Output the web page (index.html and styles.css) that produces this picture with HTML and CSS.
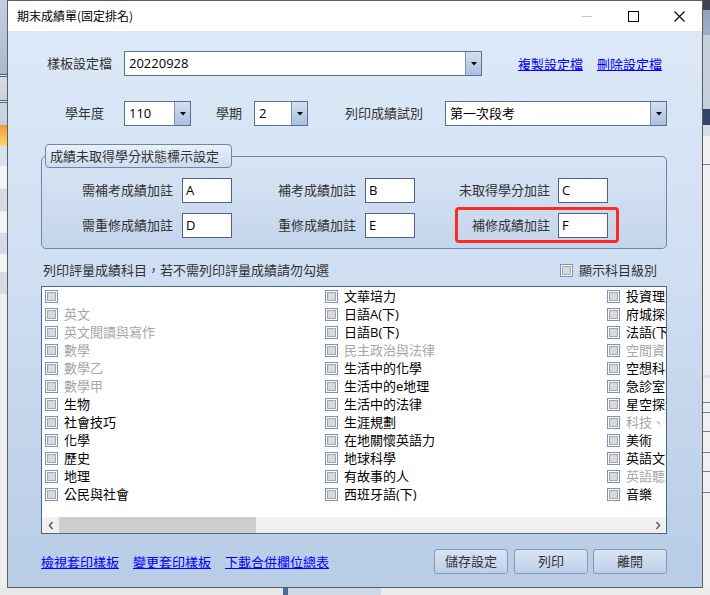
FILE: index.html
```html
<!DOCTYPE html>
<html lang="zh-Hant">
<head>
<meta charset="utf-8">
<title>期末成績單(固定排名)</title>
<link rel="stylesheet" href="styles.css">
</head>
<body>
<div class="desk">
  <div class="strip strip-left"></div>
  <div class="window">
    <div class="titlebar">
      <span class="title">期末成績單(固定排名)</span>
      <div class="controls">
        <span class="ctl"><svg width="10" height="10" viewBox="0 0 10 10"><path d="M0 5.5H10" stroke="#c4c4c4" stroke-width="1"/></svg></span>
        <span class="ctl"><svg width="11" height="11" viewBox="0 0 11 11"><rect x="0.5" y="0.5" width="10" height="10" fill="none" stroke="#000" stroke-width="1"/></svg></span>
        <span class="ctl"><svg width="11" height="11" viewBox="0 0 11 11"><path d="M0.5 0.5L10.5 10.5M10.5 0.5L0.5 10.5" stroke="#000" stroke-width="1.1"/></svg></span>
      </div>
    </div>
    <div class="content">
      <div class="row row-template">
        <span class="lbl lbl-template">樣板設定檔</span>
        <div class="combo combo-template"><span class="combo-text">20220928</span><span class="drop"><svg width="6" height="4" viewBox="0 0 6 4"><path d="M0 0H6L3 3.5Z" fill="#000"/></svg></span></div>
        <a class="link link-copy" href="#">複製設定檔</a>
        <a class="link link-del" href="#">刪除設定檔</a>
      </div>
      <div class="row row-year">
        <span class="lbl lbl-year">學年度</span>
        <div class="combo combo-year"><span class="combo-text">110</span><span class="drop"><svg width="6" height="4" viewBox="0 0 6 4"><path d="M0 0H6L3 3.5Z" fill="#000"/></svg></span></div>
        <span class="lbl lbl-term">學期</span>
        <div class="combo combo-term"><span class="combo-text">2</span><span class="drop"><svg width="6" height="4" viewBox="0 0 6 4"><path d="M0 0H6L3 3.5Z" fill="#000"/></svg></span></div>
        <span class="lbl lbl-exam">列印成績試別</span>
        <div class="combo combo-exam"><span class="combo-text">第一次段考</span><span class="drop"><svg width="6" height="4" viewBox="0 0 6 4"><path d="M0 0H6L3 3.5Z" fill="#000"/></svg></span></div>
      </div>
      <div class="group">
        <div class="group-title">成績未取得學分狀態標示設定</div>
        <div class="grow">
          <span class="glbl g1">需補考成績加註</span><span class="tb">A</span>
          <span class="glbl g2">補考成績加註</span><span class="tb">B</span>
          <span class="glbl g3">未取得學分加註</span><span class="tb">C</span>
        </div>
        <div class="grow grow2">
          <span class="glbl g1">需重修成績加註</span><span class="tb">D</span>
          <span class="glbl g2">重修成績加註</span><span class="tb">E</span>
          <span class="glbl g3">補修成績加註</span><span class="tb">F</span>
        </div>
        <div class="highlight"></div>
      </div>
      <div class="row row-listhead">
        <span class="listlabel">列印評量成績科目，若不需列印評量成績請勿勾選</span>
        <span class="showlevel"><span class="cb"><span class="cb-in"></span></span><span>顯示科目級別</span></span>
      </div>
      <div class="listbox">
        <div class="items">
          <div class="col c1">
            <div class="item"><span class="cb"><span class="cb-in"></span></span><span></span></div>
            <div class="item off"><span class="cb"><span class="cb-in"></span></span><span>英文</span></div>
            <div class="item off"><span class="cb"><span class="cb-in"></span></span><span>英文閱讀與寫作</span></div>
            <div class="item off"><span class="cb"><span class="cb-in"></span></span><span>數學</span></div>
            <div class="item off"><span class="cb"><span class="cb-in"></span></span><span>數學乙</span></div>
            <div class="item off"><span class="cb"><span class="cb-in"></span></span><span>數學甲</span></div>
            <div class="item"><span class="cb"><span class="cb-in"></span></span><span>生物</span></div>
            <div class="item"><span class="cb"><span class="cb-in"></span></span><span>社會技巧</span></div>
            <div class="item"><span class="cb"><span class="cb-in"></span></span><span>化學</span></div>
            <div class="item"><span class="cb"><span class="cb-in"></span></span><span>歷史</span></div>
            <div class="item"><span class="cb"><span class="cb-in"></span></span><span>地理</span></div>
            <div class="item"><span class="cb"><span class="cb-in"></span></span><span>公民與社會</span></div>
          </div>
          <div class="col c2">
            <div class="item"><span class="cb"><span class="cb-in"></span></span><span>文華培力</span></div>
            <div class="item"><span class="cb"><span class="cb-in"></span></span><span>日語A(下)</span></div>
            <div class="item"><span class="cb"><span class="cb-in"></span></span><span>日語B(下)</span></div>
            <div class="item off"><span class="cb"><span class="cb-in"></span></span><span>民主政治與法律</span></div>
            <div class="item"><span class="cb"><span class="cb-in"></span></span><span>生活中的化學</span></div>
            <div class="item"><span class="cb"><span class="cb-in"></span></span><span>生活中的e地理</span></div>
            <div class="item"><span class="cb"><span class="cb-in"></span></span><span>生活中的法律</span></div>
            <div class="item"><span class="cb"><span class="cb-in"></span></span><span>生涯規劃</span></div>
            <div class="item"><span class="cb"><span class="cb-in"></span></span><span>在地關懷英語力</span></div>
            <div class="item"><span class="cb"><span class="cb-in"></span></span><span>地球科學</span></div>
            <div class="item"><span class="cb"><span class="cb-in"></span></span><span>有故事的人</span></div>
            <div class="item"><span class="cb"><span class="cb-in"></span></span><span>西班牙語(下)</span></div>
          </div>
          <div class="col c3">
            <div class="item"><span class="cb"><span class="cb-in"></span></span><span>投資理財</span></div>
            <div class="item"><span class="cb"><span class="cb-in"></span></span><span>府城探索</span></div>
            <div class="item"><span class="cb"><span class="cb-in"></span></span><span>法語(下)</span></div>
            <div class="item off"><span class="cb"><span class="cb-in"></span></span><span>空間資訊</span></div>
            <div class="item"><span class="cb"><span class="cb-in"></span></span><span>空想科學</span></div>
            <div class="item"><span class="cb"><span class="cb-in"></span></span><span>急診室的故事</span></div>
            <div class="item"><span class="cb"><span class="cb-in"></span></span><span>星空探索</span></div>
            <div class="item off"><span class="cb"><span class="cb-in"></span></span><span>科技、社會與人文</span></div>
            <div class="item"><span class="cb"><span class="cb-in"></span></span><span>美術</span></div>
            <div class="item"><span class="cb"><span class="cb-in"></span></span><span>英語文寫作</span></div>
            <div class="item off"><span class="cb"><span class="cb-in"></span></span><span>英語聽講</span></div>
            <div class="item"><span class="cb"><span class="cb-in"></span></span><span>音樂</span></div>
          </div>
        </div>
        <div class="hscroll">
          <span class="sbtn"><svg width="8" height="9" viewBox="0 0 8 9"><path d="M5.5 1L2.5 4.5L5.5 8" fill="none" stroke="#606060" stroke-width="1.6"/></svg></span>
          <span class="track"><span class="thumb"></span></span>
          <span class="sbtn"><svg width="8" height="9" viewBox="0 0 8 9"><path d="M2.5 1L5.5 4.5L2.5 8" fill="none" stroke="#606060" stroke-width="1.6"/></svg></span>
        </div>
      </div>
      <div class="row row-bottom">
        <div class="links">
          <a class="link" href="#">檢視套印樣板</a>
          <a class="link" href="#">變更套印樣板</a>
          <a class="link" href="#">下載合併欄位總表</a>
        </div>
        <div class="buttons">
          <button class="btn">儲存設定</button>
          <button class="btn btn-print">列印</button>
          <button class="btn btn-exit">離開</button>
        </div>
      </div>
    </div>
  </div>
  <div class="strip strip-right"></div>
</div>
<div class="bottomstrip"></div>
</body>
</html>
```

FILE: styles.css
```css
* { box-sizing: border-box; }
html, body { margin: 0; padding: 0; }
body {
  width: 710px;
  height: 595px;
  overflow: hidden;
  background: #e6e7ea;
  font-family: "Open Sans", "Noto Sans CJK TC", sans-serif;
  font-size: 13px;
  color: #333;
}
.desk { display: flex; height: 588px; }
.strip { width: 7px; flex: none; }
.strip-left {
  background: linear-gradient(to bottom,
    #c3d0e1 0, #a9b9ce 74px,
    #4a5d7d 74px, #4a5d7d 75px, #e7ebf0 75px, #e7ebf0 76px, #4a5d7d 76px, #4a5d7d 77px,
    #d6dde7 77px, #c6d0dd 100px,
    #4e6283 100px, #4e6283 101px, #e7ebf0 101px, #e7ebf0 102px, #4e6283 102px, #4e6283 103px,
    #cbd6e4 103px, #c5d1e0 125px,
    #f09a35 125px, #f8d772 146px,
    #d9e1ec 146px, #d9e1ec 166px,
    #f3f3f3 166px, #f3f3f3 189px,
    #d3dce7 189px, #d3dce7 211px,
    #f3f3f3 211px, #f3f3f3 233px,
    #d3dce7 233px, #d3dce7 254px,
    #f3f3f3 254px, #f3f3f3 272px,
    #d3dce7 272px, #d3dce7 294px,
    #efefef 294px);
}
.strip-right {
  background: linear-gradient(to bottom,
    #3d444d 0, #3d444d 10px,
    #8ea2bb 10px, #9fb0c6 35px,
    #c6d0dc 35px, #c6d0dc 109px,
    #2f4461 109px, #34496a 125px,
    #d5dde6 125px, #d5dde6 136px,
    #f0f0f0 136px, #f0f0f0 164px,
    #6b7fa0 164px, #6b7fa0 165px,
    #f0f0f0 165px, #f0f0f0 375px,
    #d9e0ea 375px, #d9e0ea 378px,
    #f0f0f0 378px, #f0f0f0 402px,
    #6b7fa0 402px, #6b7fa0 403px,
    #f0f0f0 403px, #f0f0f0 412px,
    #6b7fa0 412px, #6b7fa0 413px,
    #f0f0f0 413px, #f0f0f0 431px,
    #6b7fa0 431px, #6b7fa0 432px,
    #f0f0f0 432px, #f0f0f0 452px,
    #6b7fa0 452px, #6b7fa0 453px,
    #f0f0f0 453px, #f0f0f0 471px,
    #6b7fa0 471px, #6b7fa0 472px,
    #f0f0f0 472px, #f0f0f0 492px,
    #6b7fa0 492px, #6b7fa0 493px,
    #f0f0f0 493px);
}
.bottomstrip {
  height: 7px;
  background: linear-gradient(to right,
    #e8e8e8 0, #e8e8e8 283px,
    #4f6890 283px, #4f6890 288px,
    #cfd9e6 288px, #cfd9e6 381px,
    #ececec 381px);
}
.window {
  width: 696px;
  height: 588px;
  flex: none;
  border: 1px solid #5e5e5e;
  display: flex;
  flex-direction: column;
  background: #fff;
}
.titlebar {
  height: 30px;
  flex: none;
  display: flex;
  align-items: center;
  background: #fff;
}
.title {
  padding-left: 9px;
  font-family: "Noto Sans CJK TC", sans-serif;
  font-size: 12px;
  color: #000;
  line-height: 16px;
}
.controls { margin-left: auto; display: flex; height: 30px; }
.ctl {
  width: 46px;
  height: 30px;
  display: flex;
  align-items: center;
  justify-content: center;
}
.ctl svg { display: block; }
.content {
  flex: 1;
  background: linear-gradient(to bottom, #dde9f8 0, #cfdef1 45%, #b8cce6 100%);
  padding: 20px 35px 0 33px;
}
.row { display: flex; align-items: center; height: 25px; }
.lbl { line-height: 25px; white-space: nowrap; color: #333; }
.lbl-template { width: 83px; padding-left: 6px; }
.combo {
  height: 25px;
  border: 1px solid #5b6f90;
  background: #fff;
  display: flex;
  align-items: stretch;
  color: #000;
}
.combo-text { flex: 1; padding-left: 4px; line-height: 23px; white-space: nowrap; overflow: hidden; }
.drop {
  width: 16px;
  margin: 0;
  border-left: 1px solid #7d91b2;
  background: linear-gradient(to bottom, #d3e0f1, #a9c0de);
  display: flex;
  align-items: center;
  justify-content: center;
}
.drop svg { display: block; margin-top: 1px; }
.combo-template { width: 358px; }
.link {
  color: #0000ff;
  text-decoration: underline;
  white-space: nowrap;
  line-height: 18px;
}
.link-copy { margin-left: 36px; }
.link-del { margin-left: 14px; }
.row-year { margin-top: 25px; }
.lbl-year { width: 83px; text-align: right; padding-right: 20px; }
.combo-year { width: 67px; }
.lbl-term { margin-left: 25px; }
.combo-term { width: 54px; margin-left: 12px; }
.lbl-exam { margin-left: 37px; }
.combo-exam { width: 222px; margin-left: 22px; }

.group {
  position: relative;
  margin-top: 30px;
  height: 93px;
  border: 1px solid #6f86ab;
  border-radius: 5px;
  background: linear-gradient(to bottom, rgba(255,255,255,0.05), rgba(120,150,200,0.14));
}
.group-title {
  margin: -13px 0 0 3px;
  width: 187px;
  height: 24px;
  border: 1px solid #6f86ab;
  border-radius: 4px;
  background: linear-gradient(to bottom, #e8f0fa, #cddbee);
  padding-left: 4px;
  line-height: 22px;
  color: #333;
  white-space: nowrap;
}
.grow { display: flex; align-items: center; height: 25px; margin-top: 10px; }
.grow2 { margin-top: 10px; }
.glbl { text-align: right; white-space: nowrap; color: #333; line-height: 25px; }
.g1 { width: 131px; margin-right: 9px; }
.g2 { width: 124px; margin-right: 9px; }
.g3 { width: 135px; margin-right: 8px; }
.tb {
  width: 50px;
  height: 25px;
  border: 1px solid #4f6389;
  background: #fff;
  color: #000;
  padding-left: 3px;
  line-height: 22px;
}
.grow2 .tb { height: 25px; }
.highlight {
  position: absolute;
  left: 413px;
  top: 50px;
  width: 164px;
  height: 36px;
  border: 3px solid #ff2a24;
  border-radius: 4px;
}

.row-listhead { margin-top: 12px; height: 18px; justify-content: space-between; }
.listlabel { margin-left: 2px; color: #333; line-height: 18px; white-space: nowrap; }
.showlevel { display: flex; align-items: center; margin-right: 10px; line-height: 18px; color: #333; }
.showlevel .cb { margin-right: 6px; }
.cb {
  width: 13px;
  height: 13px;
  flex: none;
  border: 1px solid #7392c8;
  background: #fff;
  padding: 1px;
  display: flex;
}
.cb-in {
  flex: 1;
  border: 1px solid #a6a6a6;
  background: #d9d9d9;
}

.listbox {
  margin-top: 7px;
  height: 248px;
  border: 1px solid #4f6790;
  background: #fff;
  display: flex;
  flex-direction: column;
  overflow: hidden;
}
.items { flex: 1; display: flex; overflow: hidden; padding-left: 3px; }
.col { flex: none; }
.c1 { width: 280px; }
.c2 { width: 282px; }
.c3 { width: 60px; overflow: hidden; }
.item {
  height: 18px;
  display: flex;
  align-items: center;
  white-space: nowrap;
  color: #000;
  line-height: 18px;
}
.item .cb { margin-right: 6px; }
.item.off { color: #a6a6a6; }
.hscroll { height: 16px; flex: none; display: flex; background: #f0f0f0; }
.sbtn { width: 17px; display: flex; align-items: center; justify-content: center; }
.sbtn svg { display: block; }
.track { flex: 1; display: flex; align-items: stretch; }
.thumb { width: 197px; background: #cdcdcd; }

.row-bottom { margin-top: 15px; justify-content: space-between; height: 25px; }
.links { display: flex; gap: 14px; }
.buttons { display: flex; gap: 5px; }
.btn {
  width: 74px;
  height: 25px;
  border: 1px solid #8598b8;
  border-radius: 3px;
  background: linear-gradient(to bottom, #d8e4f4, #bed0e9);
  font-family: "Open Sans", "Noto Sans CJK TC", sans-serif;
  font-size: 13px;
  color: #333;
  padding: 0;
  line-height: 23px;
}
.btn-print { margin-left: 1px; }
```
